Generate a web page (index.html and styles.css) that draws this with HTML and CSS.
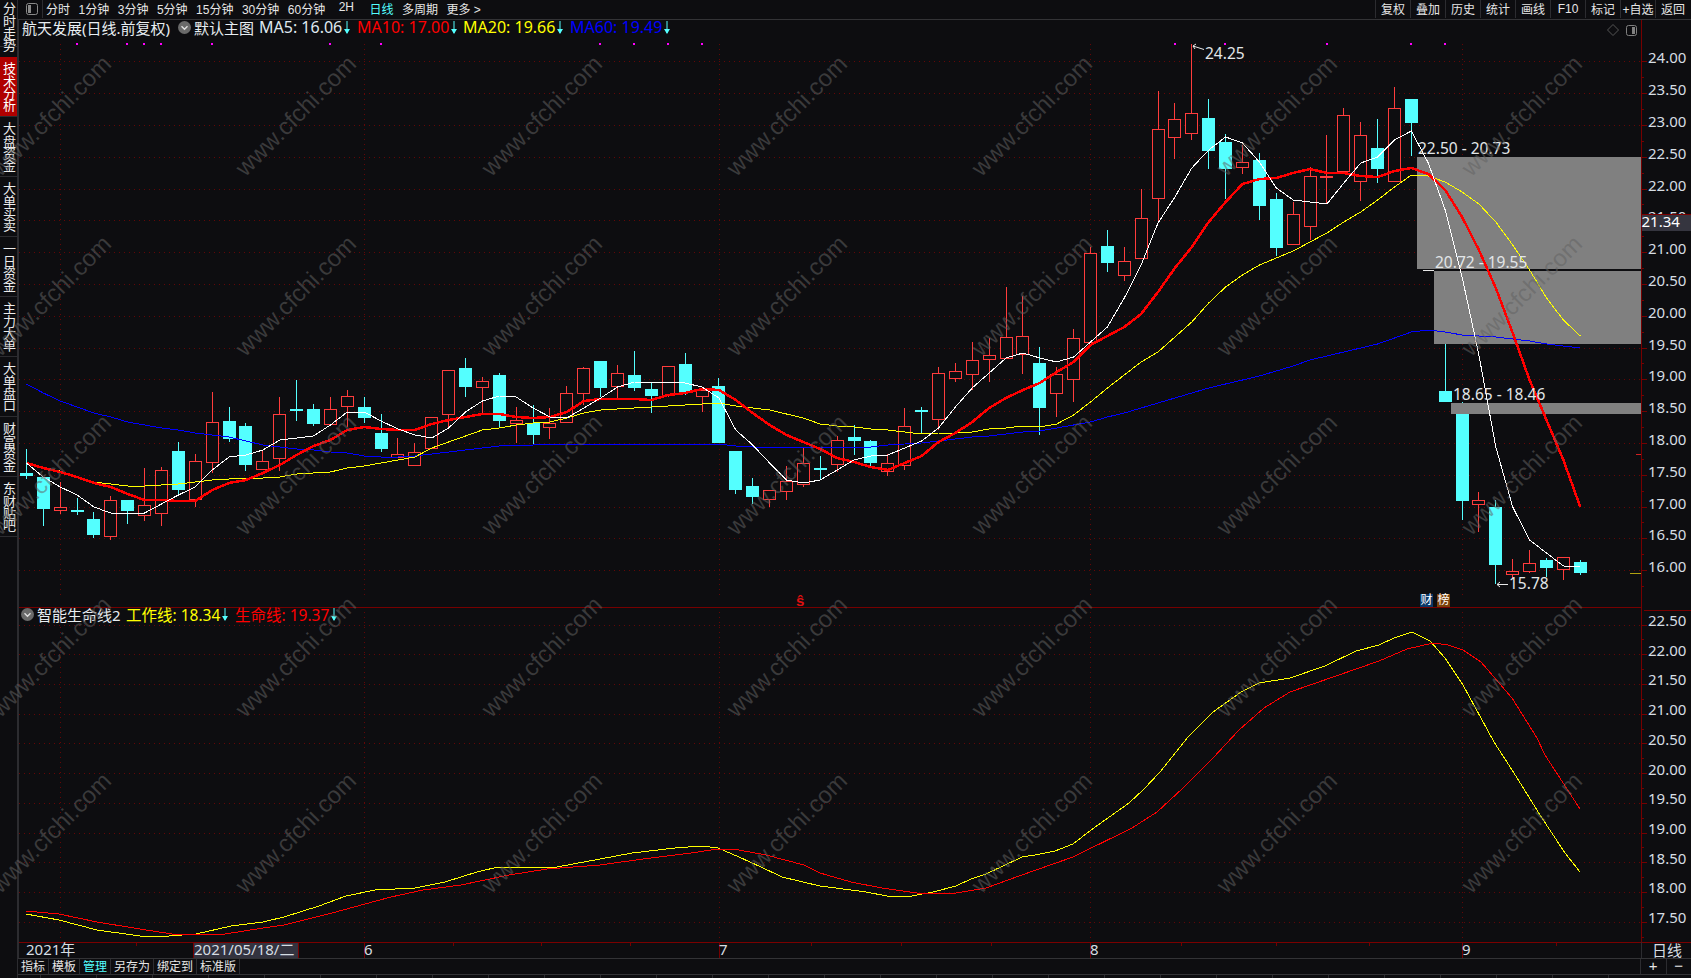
FILE: index.html
```html
<!DOCTYPE html>
<html lang="zh-CN">
<head>
<meta charset="utf-8">
<title>航天发展 日线</title>
<link rel="stylesheet" href="styles.css">
</head>
<body>
<div class="app">
  <nav class="rail">
    <div class="rail-item rail-first">分时走势</div>
    <div class="rail-item rail-on">技术分析</div>
    <div class="rail-item">大盘资金</div>
    <div class="rail-item">大单买卖</div>
    <div class="rail-item">一日资金</div>
    <div class="rail-item">主力大单</div>
    <div class="rail-item">大单盘口</div>
    <div class="rail-item">财富资金</div>
    <div class="rail-item">东财贴吧</div>
  </nav>
  <main class="main">
    <header class="topbar">
      <div class="panel-btn">
        <svg width="12" height="12" viewBox="0 0 12 12"><rect x="0.5" y="0.5" width="11" height="11" rx="2" fill="none" stroke="#8a8a8a"/><rect x="2" y="2" width="3" height="8" fill="#8a8a8a"/></svg>
      </div>
      <div class="periods">
        <span>分时</span><span>1分钟</span><span>3分钟</span><span>5分钟</span><span>15分钟</span><span>30分钟</span><span>60分钟</span>
        <span class="p-2h">2H</span><span class="cyan">日线</span><span>多周期</span><span>更多 &gt;</span>
      </div>
      <div class="tools">
        <span>复权</span><span>叠加</span><span>历史</span><span>统计</span><span>画线</span><span>F10</span><span>标记</span><span>+自选</span><span>返回</span>
      </div>
    </header>
    <section class="chart">
      <svg id="plot" class="plot" viewBox="17 20 1674 938" width="1674" height="938"></svg>
      <div class="legend legend-top">
        <span class="stock">航天发展(日线.前复权)</span>
        <svg class="dot" width="13" height="13" viewBox="0 0 13 13"><circle cx="6.5" cy="6.5" r="6.5" fill="#6a6a6a"/><path d="M3.5 5.2 6.5 8.2 9.5 5.2" fill="none" stroke="#e0e0e0" stroke-width="1.4"/></svg>
        <span class="main-name">默认主图</span>
        <span class="ma ma5">MA5: 16.06<svg class="arr" width="6" height="13" viewBox="0 0 6 13"><path d="M3 0V12" stroke="#54ffff"/><path d="M0 8H6L3 13Z" fill="#54ffff"/></svg></span>
        <span class="ma ma10">MA10: 17.00<svg class="arr" width="6" height="13" viewBox="0 0 6 13"><path d="M3 0V12" stroke="#54ffff"/><path d="M0 8H6L3 13Z" fill="#54ffff"/></svg></span>
        <span class="ma ma20">MA20: 19.66<svg class="arr" width="6" height="13" viewBox="0 0 6 13"><path d="M3 0V12" stroke="#54ffff"/><path d="M0 8H6L3 13Z" fill="#54ffff"/></svg></span>
        <span class="ma ma60">MA60: 19.49<svg class="arr" width="6" height="13" viewBox="0 0 6 13"><path d="M3 0V12" stroke="#54ffff"/><path d="M0 8H6L3 13Z" fill="#54ffff"/></svg></span>
      </div>
      <div class="legend legend-sub">
        <svg class="dot-sub" width="13" height="13" viewBox="0 0 13 13"><circle cx="6.5" cy="6.5" r="6.5" fill="#6a6a6a"/><path d="M3.5 5.2 6.5 8.2 9.5 5.2" fill="none" stroke="#e0e0e0" stroke-width="1.4"/></svg>
        <span class="sub-name">智能生命线2</span>
        <span class="ma ma20">工作线: 18.34<svg class="arr" width="6" height="13" viewBox="0 0 6 13"><path d="M3 0V12" stroke="#54ffff"/><path d="M0 8H6L3 13Z" fill="#54ffff"/></svg></span>
        <span class="ma ma10">生命线: 19.37<svg class="arr" width="6" height="13" viewBox="0 0 6 13"><path d="M3 0V12" stroke="#54ffff"/><path d="M0 8H6L3 13Z" fill="#54ffff"/></svg></span>
      </div>
      <span class="badge badge-cai">财</span>
      <span class="badge badge-bang">榜</span>
      <span class="dollar">ŝ</span>
    </section>
    <footer class="bottombar">
      <div class="tabs">
        <span>指标</span><span>模板</span><span class="cyan">管理</span><span>另存为</span><span>绑定到</span><span>标准版</span>
      </div>
      <div class="zoomers"><span>+</span><span>−</span></div>
    </footer>
    <div class="statusline"></div>
  </main>
</div>
<svg id="marks" class="watermark" viewBox="0 0 1691 978" width="1691" height="978"></svg>
<script src="chart.js"></script>
</body>
</html>
```
FILE: styles.css
```css
* { box-sizing: border-box; }
html, body { margin: 0; padding: 0; background: #0d0d10; overflow: hidden; }
body {
  position: relative;
  width: 1691px;
  height: 978px;
  color: #e6e6e6;
  font-family: "Liberation Sans", "Noto Sans CJK SC", sans-serif;
}
.app { display: flex; width: 1691px; height: 978px; }

/* left rail */
.rail {
  width: 18px;
  flex: none;
  display: flex;
  flex-direction: column;
  border-right: 1px solid #2c2c30;
}
.rail-item {
  height: 60px;
  display: flex;
  align-items: center;
  justify-content: center;
  border-bottom: 1px solid #2c2c30;
  writing-mode: vertical-rl;
  text-orientation: upright;
  white-space: nowrap;
  font-size: 13px;
  letter-spacing: -0.8px;
  line-height: 17px;
  color: #ececec;
}
.rail-first { height: 47px; margin-bottom: 10px; justify-content: flex-start; padding-top: 2px; }
.rail-on { background: #b00000; color: #fff; height: 60px; }

.main { flex: 1; min-width: 0; display: flex; flex-direction: column; }
.cyan { color: #54ffff; }

/* top bar */
.topbar {
  height: 20px;
  flex: none;
  display: flex;
  align-items: center;
  padding-bottom: 2px;
  font-size: 12px;
  border-bottom: 1px solid #333336;
}
.panel-btn {
  width: 25px;
  height: 19px;
  display: flex;
  align-items: center;
  justify-content: center;
  padding-left: 4px;
  border-right: 1px solid #2c2c30;
}
.periods { display: flex; gap: 8.5px; padding-left: 3px; white-space: nowrap; }
.p-2h { margin-left: 5px; margin-right: 7px; }
.tools { margin-left: auto; margin-right: 1px; display: flex; height: 19px; }
.tools span {
  width: 35px;
  display: flex;
  align-items: center;
  justify-content: center;
  border-left: 1px solid #2c2c30;
  white-space: nowrap;
}

/* chart */
.chart { position: relative; height: 938px; flex: none; }
.plot { display: block; overflow: visible; }
.legend {
  position: absolute;
  left: 4px;
  display: flex;
  align-items: center;
  height: 18px;
  font-family: "Noto Sans", "Noto Sans CJK SC", sans-serif;
  font-size: 15px;
  white-space: nowrap;
}
.legend-top { top: -2px; }
.legend-sub { top: 585px; left: 1px; font-size: 15.5px; }
.stock { color: #e8eef2; width: 156px; }
.dot { flex: none; margin-right: 3px; }
.main-name { width: 65px; color: #e8eef2; }
.ma { display: inline-flex; align-items: center; }
.legend-top .ma { font-size: 16px; }
.ma5 { color: #dfe8ef; width: 98px; }
.ma10 { color: #ff0000; width: 106px; }
.ma20 { color: #ffff00; width: 107px; }
.ma60 { color: #0000ff; }
.arr { margin-left: 2px; flex: none; }
.dot-sub { margin-left: 2px; margin-right: 3px; flex: none; }
.sub-name { width: 89px; color: #e8eef2; font-size: 15px; }
.legend-sub .ma20 { width: 109px; }

.badge {
  position: absolute;
  top: 574px;
  width: 13px;
  height: 13px;
  font-size: 12px;
  line-height: 13px;
  text-align: center;
  color: #fff;
}
.badge-cai { left: 1402px; background: #0a3868; }
.badge-bang { left: 1419px; background: #7a4008; }
.dollar {
  position: absolute;
  left: 778px;
  top: 573px;
  font-size: 15px;
  line-height: 15px;
  font-weight: 700;
  color: #e01010;
}

/* svg text */
.ax {
  font-family: "Noto Sans", sans-serif;
  font-size: 15px;
  fill: #d6dde3;
}
.note {
  font-family: "Noto Sans", sans-serif;
  font-size: 15.5px;
  fill: #e2e6e8;
}
.tag { font-family: "Noto Sans", sans-serif; font-size: 15px; fill: #fff; }
.cjk { font-family: "Noto Sans", "Noto Sans CJK SC", sans-serif; }

/* bottom bar */
.bottombar {
  height: 17px;
  flex: none;
  display: flex;
  font-size: 12px;
  border-top: 1px solid #333336;
  border-bottom: 1px solid #333336;
}
.tabs { display: flex; }
.tabs span {
  padding: 2px 3px 0;
  line-height: 13px;
  border-right: 1px solid #2c2c30;
  white-space: nowrap;
}
.zoomers { margin-left: auto; display: flex; }
.zoomers span {
  width: 25.5px;
  text-align: center;
  line-height: 14px;
  font-size: 15px;
  border-left: 1px solid #2c2c30;
}
.statusline {
  flex: 1;
  background-image: repeating-linear-gradient(to right, #0d0d10 0 55px, #2c2c30 55px 56px);
  background-position: -33px 0;
}

/* watermark overlay */
.watermark { position: absolute; left: 0; top: 0; pointer-events: none; }
.mark {
  font-family: "Liberation Sans", sans-serif;
  font-size: 24px;
  fill: rgba(98, 98, 98, 0.53);
}
```
FILE: chart.js
```js
(function () {
  var NS = 'http://www.w3.org/2000/svg';
  var plot = document.getElementById('plot');
  var marks = document.getElementById('marks');
  var BG = '#0d0d10', UP = '#ff3c3c', DOWN = '#54ffff', AXIS = '#760000', GRID = '#640606';

  function el(parent, name, attrs, text) {
    var n = document.createElementNS(NS, name);
    for (var k in attrs) n.setAttribute(k, attrs[k]);
    if (text != null) n.textContent = text;
    parent.appendChild(n);
    return n;
  }
  function line(x1, y1, x2, y2, stroke, extra) {
    var a = { x1: x1, y1: y1, x2: x2, y2: y2, stroke: stroke, 'shape-rendering': 'crispEdges' };
    for (var k in extra || {}) a[k] = extra[k];
    return el(plot, 'line', a);
  }
  function X(i) { return 25.4 + 16.89 * i; }

  /* 0 = rising (hollow red), 1 = falling (solid cyan): [kind, high, top, bottom, low] */
  var K = [
    [1,449,473,476,479],[1,477,477,509,526],[0,482,507,510,514],[1,498,510,512,515],[1,512,519,535,538],
    [0,496,500,536,540],[1,500,500,511,524],[0,468,505,515,521],[0,467,470,513,526],[1,442,451,490,494],
    [0,454,461,499,507],[0,392,422,462,473],[1,407,421,439,442],[1,423,426,465,471],[0,451,461,469,469],
    [0,397,414,458,471],[1,380,409,411,421],[1,404,409,424,426],[0,397,409,424,424],[0,390,396,406,427],
    [1,397,407,418,423],[1,414,433,449,452],[0,438,454,457,457],[0,443,452,465,465],[0,417,417,448,448],
    [0,370,370,414,427],[1,358,368,387,397],[0,377,381,387,413],[1,373,375,421,427],[0,407,420,423,443],
    [1,405,423,435,444],[0,408,423,427,439],[0,386,393,422,423],[0,367,368,393,405],[1,361,361,388,397],
    [0,365,373,386,398],[1,351,375,388,391],[1,382,389,396,413],[0,366,366,395,397],[1,353,364,392,395],
    [0,388,390,396,412],[1,378,386,443,443],[1,451,451,490,494],[1,478,486,497,504],[0,490,490,499,507],
    [0,466,481,491,500],[0,448,463,484,487],[1,456,468,470,480],[0,436,440,464,472],[1,425,437,441,455],
    [1,440,441,463,466],[0,454,463,471,476],[0,408,426,465,470],[1,407,410,412,433],[0,367,373,419,430],
    [0,363,371,378,382],[0,342,360,374,390],[0,338,355,359,382],[0,287,337,358,359],[0,296,336,354,374],
    [1,347,363,408,435],[0,367,374,393,417],[0,329,338,379,402],[0,247,253,342,342],[1,230,246,263,272],
    [0,247,261,275,281],[0,189,218,258,258],[0,91,129,198,223],[0,103,119,137,159],[0,44,113,133,140],
    [1,99,118,151,169],[1,134,142,169,199],[0,145,162,167,174],[1,153,160,206,220],[1,193,199,248,256],
    [0,202,214,244,245],[0,167,176,226,240],[0,135,176,177,203],[0,108,115,171,171],[0,122,135,181,201],
    [1,119,148,169,183],[0,87,108,181,181],[1,99,99,123,156],null,[1,344,391,402,402],
    [1,402,414,501,520],[0,492,500,504,532],[1,500,507,565,584],[0,559,571,574,578],[0,550,563,571,573],
    [1,558,560,568,577],[0,557,557,569,580],[1,560,562,573,575]
  ];

  var MA5 = [463,477,487,495,507,513,513,513,504,495,487,470,457,455,450,440,438,436,425,412,412,421,429,435,438,428,412,401,396,397,408,417,418,408,398,387,382,383,382,383,387,398,430,445,463,480,483,480,470,460,456,455,448,441,428,407,388,373,358,353,358,362,357,342,327,298,265,223,197,168,150,137,143,162,188,200,202,204,183,163,157,140,131,163,210,277,355,447,507,540,553,566,567];
  var MA10 = [463,468,472,477,483,487,494,500,500,501,501,490,483,480,473,465,455,446,440,430,427,429,430,430,424,420,417,414,414,417,418,417,412,401,399,399,399,400,395,393,389,390,400,413,425,435,442,449,458,462,467,470,463,456,442,433,422,408,398,390,383,372,362,345,336,327,314,292,268,247,222,202,184,179,178,173,169,173,173,176,177,171,168,174,190,217,250,288,333,380,420,460,507];
  var MA20 = [463,468,471,477,482,484,486,486,485,484,482,480,479,478,478,477,474,473,472,468,466,463,460,457,448,442,436,430,428,425,423,422,418,413,410,409,408,407,406,405,404,403,406,408,410,414,418,424,426,427,429,430,432,434,433,433,432,429,428,426,427,424,415,402,388,375,362,352,337,322,303,287,275,265,258,251,242,233,222,212,200,187,175,176,182,192,204,222,245,270,298,320,336];
  var MA60 = [384,393,401,407,413,417,422,425,428,430,433,435,437,441,445,447,449,450,452,453,456,457,457,456,454,452,450,448,446,445,445,444,444,444,444,444,444,444,444,444,444,444,446,447,447,447,447,447,447,447,447,445,444,443,441,439,437,436,434,432,431,428,425,422,417,413,408,403,398,393,388,384,380,376,371,366,360,356,352,348,344,338,332,330,332,335,336,337,339,341,344,346,348];

  var SUB_Y = [[25,914],[58,920],[96,930],[139,936],[168,936],[195,934],[230,926],[262,922],[283,917],[318,906],[345,896],[374,890],[414,888],[444,882],[476,872],[497,867],[556,867],[599,859],[631,853],[674,848],[701,846],[717,848],[738,857],[760,867],[781,877],[819,886],[850,890],[865,892],[886,896],[911,896],[932,892],[955,886],[970,879],[985,874],[1021,857],[1034,855],[1054,851],[1072,844],[1090,830],[1128,803],[1143,789],[1159,772],[1187,737],[1212,712],[1240,692],[1258,683],[1289,678],[1324,666],[1355,651],[1378,645],[1393,638],[1411,632],[1429,641],[1444,658],[1462,685],[1493,742],[1513,773],[1539,815],[1564,853],[1579,872]];
  var SUB_R = [[25,911],[58,914],[96,922],[139,929],[171,934],[197,935],[224,934],[262,928],[283,925],[331,913],[364,904],[390,897],[422,890],[460,885],[508,875],[546,869],[599,865],[642,859],[690,853],[717,849],[738,850],[765,855],[803,865],[819,873],[850,882],[881,888],[916,893],[955,893],[985,888],[1018,876],[1072,857],[1131,828],[1156,812],[1182,788],[1212,758],[1238,730],[1263,708],[1289,692],[1335,676],[1378,661],[1406,649],[1432,643],[1447,645],[1462,650],[1480,662],[1511,698],[1536,738],[1544,755],[1579,809]];

  var R = 1640, L = 18;
  var upY = function (p) { return 61.3 + (24 - p) * 63.6; };
  var loY = function (p) { return 624.5 + (22.5 - p) * 59.44; };
  var dots = { 'stroke-dasharray': '1 4' };

  /* grid */
  var p, y;
  for (p = 24; p >= 16; p -= 0.5) {
    y = Math.round(upY(p)) + 0.5;
    line(L, y, R, y, GRID, dots);
    line(R, y, R + 6, y, AXIS);
    line(R, Math.round(upY(p - 0.25)) + 0.5, R + 3, Math.round(upY(p - 0.25)) + 0.5, AXIS);
  }
  for (p = 22.5; p >= 17.5; p -= 0.5) {
    y = Math.round(loY(p)) + 0.5;
    line(L, y, R, y, GRID, dots);
    line(R, y, R + 6, y, AXIS);
    line(R, Math.round(loY(p - 0.25)) + 0.5, R + 3, Math.round(loY(p - 0.25)) + 0.5, AXIS);
  }
  [59, 363, 718, 1089, 1461].forEach(function (x) {
    line(x + 0.5, 44, x + 0.5, 598, GRID, dots);
    line(x + 0.5, 612, x + 0.5, 942, GRID, dots);
  });

  /* magenta event dots */
  [76, 126, 143, 160, 211, 329, 380, 599, 633, 667, 701, 1174, 1224, 1326, 1410, 1444].forEach(function (x) {
    el(plot, 'rect', { x: x - 1, y: 43, width: 2, height: 2, fill: '#ff00ff' });
  });

  /* candles */
  K.forEach(function (c, i) {
    if (!c) return;
    var x = Math.floor(X(i)), col = c[0] ? DOWN : UP;
    el(plot, 'rect', { x: x, y: c[1], width: 1, height: c[4] - c[1], fill: col, 'shape-rendering': 'crispEdges' });
    if (c[0]) {
      el(plot, 'rect', { x: x - 6, y: c[2], width: 13, height: Math.max(c[3] - c[2], 2), fill: col, 'shape-rendering': 'crispEdges' });
    } else {
      el(plot, 'rect', { x: x - 5.5, y: c[2] + 0.5, width: 12, height: Math.max(c[3] - c[2], 1), fill: BG, stroke: col, 'shape-rendering': 'crispEdges' });
    }
  });

  /* gap boxes */
  var GRAY = '#808080';
  el(plot, 'rect', { x: 1416, y: 157, width: R - 1416, height: 112, fill: GRAY });
  el(plot, 'rect', { x: 1433, y: 271, width: R - 1433, height: 73, fill: GRAY });
  el(plot, 'rect', { x: 1450, y: 403, width: R - 1450, height: 11, fill: GRAY });
  line(1422, 270.5, 1433, 270.5, '#e8e8e8');

  /* moving averages */
  function poly(pts, color, w) {
    el(plot, 'polyline', { points: pts.map(function (q) { return q.join(','); }).join(' '), fill: 'none', stroke: color, 'stroke-width': w, 'shape-rendering': 'crispEdges', 'stroke-linejoin': 'round' });
  }
  function ser(a) { return a.map(function (v, i) { return [X(i).toFixed(1), v]; }); }
  poly(ser(MA60), '#0000ff', 1);
  poly(ser(MA20), '#ffff00', 1);
  poly(ser(MA10), '#ff0000', 2.5);
  poly(ser(MA5), '#ffffff', 1);
  poly(SUB_Y, '#ffff00', 1);
  poly(SUB_R, '#ff0000', 1);

  /* pane frames */
  line(R + 0.5, 20, R + 0.5, 942, AXIS);
  line(L, 607.5, R, 607.5, AXIS);
  line(R + 3, 610.5, 1691, 610.5, AXIS);
  line(L, 942.5, 1691, 942.5, '#7a0000');
  line(L - 1 + 0.5, 20, L - 1 + 0.5, 958, '#2c2c30');
  line(R + 0.5, 942, R + 0.5, 958, '#2c2c30');
  line(1635, 454.5, R, 454.5, '#d02020');
  line(1629, 573.5, R, 573.5, '#b0a010');

  /* top-right toggles */
  el(plot, 'path', { d: 'M1612 24.5 1617.5 30 1612 35.5 1606.5 30Z', fill: 'none', stroke: '#555' });
  el(plot, 'rect', { x: 1625.5, y: 25.5, width: 10, height: 10, rx: 2, fill: 'none', stroke: '#808080' });
  el(plot, 'rect', { x: 1631, y: 27, width: 3, height: 7, fill: '#808080' });

  /* axis labels */
  function ax(p, baseline) { el(plot, 'text', { x: 1647, y: baseline, 'class': 'ax' }, p.toFixed(2)); }
  for (p = 24; p >= 16; p -= 0.5) ax(p, upY(p) + 2);
  for (p = 22.5; p >= 17.5; p -= 0.5) ax(p, loY(p) + 1.5);

  /* last-price tag */
  el(plot, 'rect', { x: 1641, y: 214, width: 50, height: 17, fill: '#35353f' });
  line(1641, 214.5, 1691, 214.5, '#7a0000');
  el(plot, 'text', { x: 1640.5, y: 227, 'class': 'tag' }, '21.34');

  /* price notes */
  function note(x, y, s) { el(plot, 'text', { x: x, y: y, 'class': 'note' }, s); }
  note(1204, 59, '24.25');
  note(1417, 154, '22.50 - 20.73');
  note(1434, 268, '20.72 - 19.55');
  note(1452, 400, '18.65 - 18.46');
  note(1508, 589, '15.78');
  el(plot, 'path', { d: 'M1203 49.5 1192 46M1192 46 1195 44M1192 46 1194 49', fill: 'none', stroke: '#e8e8e8' });
  el(plot, 'path', { d: 'M1507 584.5H1496M1496 584.5 1499 582M1496 584.5 1499 587', fill: 'none', stroke: '#e8e8e8' });

  /* time axis */
  el(plot, 'rect', { x: 192, y: 943, width: 105, height: 15, fill: '#33333f' });
  line(192.5, 943, 192.5, 958, AXIS);
  line(297.5, 943, 297.5, 958, AXIS);
  [135, 452, 540, 629, 810, 900, 990, 1180, 1275, 1368, 1555].forEach(function (x) { line(x + 0.5, 942, x + 0.5, 946, AXIS); });
  [[363, '6'], [718, '7'], [1089, '8'], [1461, '9']].forEach(function (d) {
    line(d[0] + 0.5, 943, d[0] + 0.5, 958, AXIS);
    el(plot, 'text', { x: d[0], y: 955, 'class': 'ax' }, d[1]);
  });
  el(plot, 'text', { x: 25, y: 955, 'class': 'ax cjk' }, '2021年');
  el(plot, 'text', { x: 193, y: 955, 'class': 'ax cjk' }, '2021/05/18/二');
  el(plot, 'text', { x: 1651, y: 956, 'class': 'ax cjk' }, '日线');

  /* site watermark across the whole window */
  [52, 297, 543, 788, 1033, 1278, 1523].forEach(function (cx) {
    [117, 297, 476, 658, 834].forEach(function (cy) {
      el(marks, 'text', { x: cx, y: cy, 'class': 'mark', 'text-anchor': 'middle', 'dominant-baseline': 'middle', transform: 'rotate(-45 ' + cx + ' ' + cy + ')' }, 'www.cfchi.com');
    });
  });
})();
```
